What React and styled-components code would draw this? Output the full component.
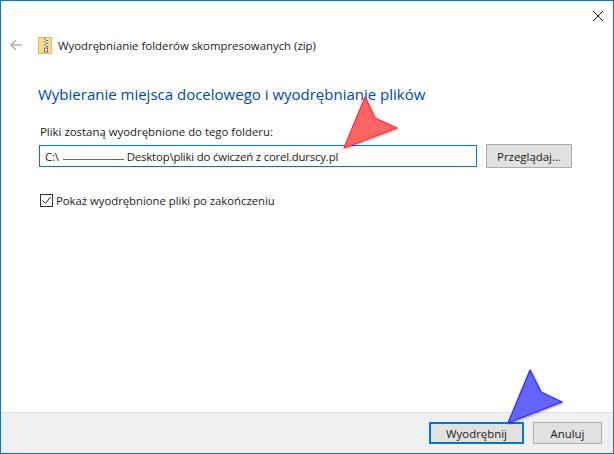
import React from "react";
import styled, { createGlobalStyle } from "styled-components";

const GlobalStyle = createGlobalStyle`
  html, body { margin: 0; padding: 0; background: #fff; }
  body { font-family: "Open Sans", "Noto Sans", sans-serif; }
`;

const Window = styled.div`
  width: 614px;
  height: 454px;
  box-sizing: border-box;
  border: 1px solid #0078d7;
  display: flex;
  flex-direction: column;
  position: relative;
  overflow: hidden;
  background: #fff;
`;

const TitleBar = styled.div`
  height: 29px;
  display: flex;
  justify-content: flex-end;
  align-items: center;
  padding-right: 9px;
`;

const CloseButton = styled.div`
  width: 12px;
  height: 12px;
  display: flex;
`;

const NavRow = styled.div`
  height: 30px;
  display: flex;
  align-items: center;
  padding-left: 8px;
`;

const BackArrow = styled.div`
  width: 14px;
  height: 14px;
  display: flex;
  margin-right: 15px;
`;

const ZipIcon = styled.div`
  width: 14px;
  height: 17px;
  display: flex;
  margin-right: 6px;
`;

const WizardTitle = styled.div`
  font-size: 11.4px;
  color: #1a1a1a;
  white-space: nowrap;
`;

const Content = styled.div`
  flex: 1;
  padding: 0 36px 0 37px;
  display: flex;
  flex-direction: column;
`;

const Heading = styled.h1`
  margin: 22px 0 0;
  font-size: 15px;
  line-height: 24px;
  font-weight: 400;
  color: #0046b4;
  white-space: nowrap;
`;

const FieldLabel = styled.div`
  margin: 18px 0 0 2px;
  font-size: 11.4px;
  line-height: 16px;
  color: #1a1a1a;
`;

const PathRow = styled.div`
  display: flex;
  align-items: center;
  margin-top: 4px;
  margin-left: 1px;
`;

const PathBox = styled.div`
  width: 438px;
  height: 22px;
  box-sizing: border-box;
  border: 1px solid #0078d7;
  padding-left: 5px;
  display: flex;
  align-items: center;
  font-size: 11.4px;
  letter-spacing: -0.19px;
  color: #1a1a1a;
  white-space: pre;
`;

const Redacted = styled.span`
  display: inline-block;
  width: 61px;
  height: 1px;
  background: #6a6a6a;
  margin: 7px 3px 0 4px;
`;

const Button = styled.div`
  box-sizing: border-box;
  width: ${(p) => p.$width}px;
  height: ${(p) => p.$height || 22}px;
  background: #e1e1e1;
  border: ${(p) => (p.$primary ? "2px solid #0078d7" : "1px solid #adadad")};
  display: flex;
  align-items: center;
  justify-content: center;
  font-size: 11.4px;
  color: #1a1a1a;
`;

const BrowseButton = styled(Button)`
  margin-left: 9px;
`;

const CheckRow = styled.div`
  display: flex;
  align-items: center;
  margin: 25px 0 0 2px;
  font-size: 11.3px;
  color: #1a1a1a;
`;

const CheckBox = styled.div`
  width: 13px;
  height: 13px;
  box-sizing: border-box;
  border: 1px solid #333;
  display: flex;
  margin-right: 3px;
`;

const Footer = styled.div`
  height: 41px;
  box-sizing: border-box;
  background: #f0f0f0;
  border-top: 1px solid #dfdfdf;
  display: flex;
  align-items: center;
  justify-content: flex-end;
  gap: 9px;
  padding: 0 11px 0 0;
`;

const Pointer = styled.svg`
  position: absolute;
  left: ${(p) => p.$left}px;
  top: ${(p) => p.$top}px;
  overflow: visible;
  filter: drop-shadow(1px 1px 1px rgba(0, 0, 0, 0.3));
`;

const App = () => (
  <>
    <GlobalStyle />
    <Window>
      <TitleBar>
        <CloseButton>
          <svg width="12" height="12" viewBox="0 0 12 12">
            <path d="M1 1l10 10M11 1L1 11" stroke="#111" strokeWidth="1" fill="none" />
          </svg>
        </CloseButton>
      </TitleBar>
      <NavRow>
        <BackArrow>
          <svg width="14" height="14" viewBox="0 0 14 14">
            <path d="M13 7H2M7 2L2 7l5 5" stroke="#b4b4b4" strokeWidth="1.6" fill="none" />
          </svg>
        </BackArrow>
        <ZipIcon>
          <svg width="14" height="17" viewBox="0 0 14 17">
            <rect x="0.5" y="0.5" width="13" height="16" fill="#f8dc83" stroke="#dcbc5a" />
            <rect x="6" y="1" width="4" height="15" fill="#e4e4e4" />
            <path d="M6 2h2M8 3.5h2M6 5h2M8 6.5h2M6 8h2M8 9.5h2" stroke="#666" strokeWidth="1" />
            <rect x="6.5" y="11" width="3" height="4" fill="none" stroke="#777" strokeWidth="1" />
          </svg>
        </ZipIcon>
        <WizardTitle>Wyodrębnianie folderów skompresowanych (zip)</WizardTitle>
      </NavRow>
      <Content>
        <Heading>Wybieranie miejsca docelowego i wyodrębnianie plików</Heading>
        <FieldLabel>Pliki zostaną wyodrębnione do tego folderu:</FieldLabel>
        <PathRow>
          <PathBox>
            C:\<Redacted />Desktop\pliki do ćwiczeń z corel.durscy.pl
          </PathBox>
          <BrowseButton $width={86} $height={24}>Przeglądaj...</BrowseButton>
        </PathRow>
        <CheckRow>
          <CheckBox>
            <svg width="11" height="11" viewBox="0 0 11 11">
              <path d="M1.5 5.5l3 3 5-6.5" stroke="#222" strokeWidth="1" fill="none" />
            </svg>
          </CheckBox>
          Pokaż wyodrębnione pliki po zakończeniu
        </CheckRow>
      </Content>
      <Footer>
        <Button $primary $width={95}>Wyodrębnij</Button>
        <Button $width={69}>Anuluj</Button>
      </Footer>
      <Pointer $left={339} $top={94} width="58" height="56" viewBox="0 0 58 56">
        <path d="M25 2L35 23L57 33L4 53Z" fill="#ff6464" stroke="#ff2d3c" strokeWidth="1.2" strokeLinejoin="round" />
      </Pointer>
      <Pointer $left={504} $top={366} width="58" height="58" viewBox="0 0 58 58">
        <path d="M25 3L36 25L57 35L3 56Z" fill="#6464ff" stroke="#2a2aff" strokeWidth="1.2" strokeLinejoin="round" />
      </Pointer>
    </Window>
  </>
);

export default App;
